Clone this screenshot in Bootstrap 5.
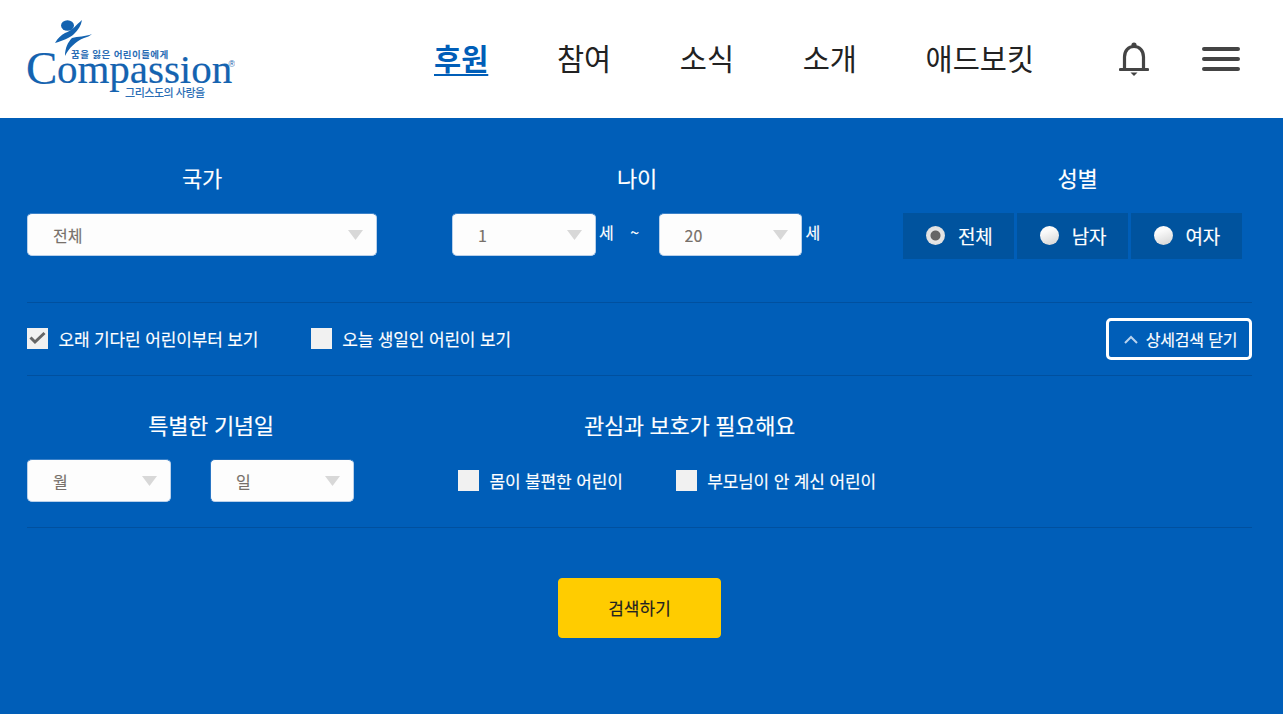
<!DOCTYPE html>
<html lang="ko">
<head>
<meta charset="UTF-8">
<title>어린이 후원</title>
<link href="https://cdn.jsdelivr.net/npm/bootstrap@5.3.0/dist/css/bootstrap.min.css" rel="stylesheet">
<style>
body { font-family: "Noto Sans CJK KR", "Noto Sans", sans-serif; background: #005eb8; letter-spacing: -0.2px; overflow: hidden; }
.top-bar { height: 118px; background: #fff; padding: 0 43px 0 27px; }
.brand-logo { display: block; width: 208px; height: 80px; margin-top: -1px; }
.main-menu { gap: 68.6px; margin-left: 199px; margin-top: -4px; }
.main-menu a { font-size: 29.5px; color: #222; text-decoration: none; padding: 0; letter-spacing: 0; line-height: 40px; }
.main-menu a.active { color: #005eb8; font-weight: 700; text-decoration: underline; text-underline-offset: 4px; }
.top-icons { margin-left: auto; gap: 53px; }
.burger { width: 38px; display: flex; flex-direction: column; gap: 6.5px; }
.burger span { display: block; height: 3.5px; background: #444; border-radius: 2px; }
.search-area { padding: 0 31px 0 27px; color: #fff; -webkit-text-stroke: 0.15px currentColor; }
.group-title { font-size: 22px; line-height: 32px; font-weight: 400; text-align: center; margin: 0 0 20px; color: #fff; letter-spacing: -0.3px; }
.first-row { padding-top: 43px; height: 185px; border-bottom: 1px solid #00509f; }
.col-country { width: 350px; margin-right: 75px; }
.col-age { width: 370px; margin-right: 81px; }
.col-gender { width: 349px; }
.pick { height: 43px; flex: none; border: 1px solid #b9d0ea; border-top-color: #3c82c9; border-radius: 5px; background-color: #fdfdfd; color: #77706a; font-size: 16px; padding: 0 24px 0 25px; background-image: url("data:image/svg+xml,%3Csvg xmlns='http://www.w3.org/2000/svg' width='15' height='10'%3E%3Cpath d='M0 0h15L7.5 10z' fill='%23d8d8d8'/%3E%3C/svg%3E"); background-position: right 13px center; background-size: 15px 10px; font-family: inherit; }
.pick-age { width: 144px; }
.tilde + .pick-age { width: 143px; }
.age-row span { font-size: 16px; line-height: 24px; margin-top: 7px; }
.age-unit { margin-left: 3px; }
.tilde + .pick-age + .age-unit { margin-left: 4px; }
.tilde { width: 45px; text-align: center; padding-right: 3px; }
.gender-box { gap: 2.5px; }
.gender-item { width: 111.3px; height: 46px; background: #00539e; margin: 0; padding: 0 0 0 23px; gap: 13px; font-size: 19px; color: #fff; }
.gender-item .form-check-input { width: 19px; height: 19px; margin: 0 0 1px; border: 0; float: none; background: linear-gradient(160deg, #fafafa 30%, #d2d2d2); }
.gender-item .form-check-input:checked { background: radial-gradient(circle, #666 0 4.5px, #e6e6e6 5.5px, #d8d8d8); }
.options-row { height: 73px; gap: 52.5px; border-bottom: 1px solid #00509f; }
.tick-item { margin: 0; padding: 0; gap: 10.5px; font-size: 17px; color: #fff; letter-spacing: -0.15px; white-space: nowrap; }
.tick-item .form-check-input { width: 21px; height: 21px; margin: 0 0 2px; float: none; border: 0; border-radius: 0; background-color: #f1f1f1; }
.tick-item .form-check-input:checked { background-color: #f1f1f1; background-image: url("data:image/svg+xml,%3Csvg xmlns='http://www.w3.org/2000/svg' viewBox='0 0 21 21'%3E%3Cpath d='M3.500 9.500l4.500 4.500 9.500-9' fill='none' stroke='%23666' stroke-width='3'/%3E%3C/svg%3E"); background-size: 21px; }
.detail-btn { width: 146px; height: 42px; border: 3px solid #fff; border-radius: 5px; color: #fff; font-size: 16px; gap: 8px; padding: 0 0 0 3px; background: transparent; letter-spacing: -0.2px; }
.detail-btn:hover { color: #fff; }
.second-row { padding-top: 32px; height: 152px; border-bottom: 1px solid #00509f; }
.col-date { width: 327px; margin-right: 104px; }
.col-date .group-title { padding-left: 41px; margin-bottom: 19px; }
.pick-date { width: 144px; }
.pick-date:last-child { border-left-color: #2a76c4; border-top-color: #1f6cba; }
.col-care { width: 417px; }
.col-care .group-title { padding-left: 46px; margin-bottom: 19px; }
.care-ticks { gap: 53px; padding-top: 1px; height: 43px; }
.find-btn { width: 163px; height: 60px; background: #ffcc00; border-color: #ffcc00; color: #222; font-size: 17px; border-radius: 4px; margin: 50px auto 0; display: block; }
</style>
</head>
<body>
<nav class="navbar top-bar flex-nowrap justify-content-start">
  <a href="#" class="d-block">
    <svg class="brand-logo" viewBox="27 18 208 80">
      <ellipse cx="67.500" cy="24.500" rx="6.500" ry="5.200" fill="#1463b0"/>
      <path d="M82 19C76 24 72 30 65 32C61 34 58 37 55 42C62 40 70 37 74 33C78 29 81 25 82 19Z" fill="#1463b0"/>
      <path d="M92 33C85 36 78 35 72 37C68 41 65 47 65 55C69 47 76 40 84 37C87 36 90 35 92 33Z" fill="#1463b0"/>
      <text x="71" y="56.500" font-size="9.500" font-weight="700" fill="#2a6db5" textLength="97" font-family="Noto Sans CJK KR">꿈을 잃은 어린이들에게</text>
      <text x="26" y="83" font-size="47" fill="#1463b0" stroke="#1463b0" stroke-width="0.2" font-family="Liberation Serif">C</text>
      <text x="57" y="82" font-size="41" fill="#1463b0" stroke="#1463b0" stroke-width="0.2" font-family="Liberation Serif" textLength="175">ompassion</text>
      <text x="228.500" y="66" font-size="9" fill="#1463b0" font-family="Liberation Sans">®</text>
      <text x="125" y="95.500" font-size="11" font-weight="500" fill="#2a6db5" textLength="80" font-family="Noto Sans CJK KR">그리스도의 사랑을</text>
    </svg>
  </a>
  <div class="nav main-menu flex-nowrap">
    <a class="nav-link active" href="#">후원</a>
    <a class="nav-link" href="#">참여</a>
    <a class="nav-link" href="#">소식</a>
    <a class="nav-link" href="#">소개</a>
    <a class="nav-link" href="#">애드보킷</a>
  </div>
  <div class="d-flex align-items-center top-icons">
    <svg width="30" height="36" viewBox="0 0 30 36">
      <circle cx="15" cy="4" r="2.600" fill="#444"/>
      <path d="M5.500 28V16C5.500 9.500 9.500 5.500 15 5.500S24.500 9.500 24.500 16V28" fill="none" stroke="#444" stroke-width="3.200"/>
      <path d="M1.500 28.500H28.500" stroke="#444" stroke-width="3.200" stroke-linecap="round"/>
      <path d="M11.500 31.500H18.500L15 35Z" fill="#444"/>
    </svg>
    <div class="burger"><span></span><span></span><span></span></div>
  </div>
</nav>

<form class="search-area">
  <div class="d-flex first-row">
    <div class="col-country">
      <h5 class="group-title">국가</h5>
      <select class="form-select pick"><option>전체</option></select>
    </div>
    <div class="col-age">
      <h5 class="group-title">나이</h5>
      <div class="d-flex age-row">
        <select class="form-select pick pick-age"><option>1</option></select>
        <span class="age-unit">세</span>
        <span class="tilde">~</span>
        <select class="form-select pick pick-age"><option>20</option></select>
        <span class="age-unit">세</span>
      </div>
    </div>
    <div class="col-gender">
      <h5 class="group-title">성별</h5>
      <div class="d-flex gender-box">
        <label class="form-check d-flex align-items-center gender-item"><input class="form-check-input" type="radio" name="gender" checked>전체</label>
        <label class="form-check d-flex align-items-center gender-item"><input class="form-check-input" type="radio" name="gender">남자</label>
        <label class="form-check d-flex align-items-center gender-item"><input class="form-check-input" type="radio" name="gender">여자</label>
      </div>
    </div>
  </div>

  <div class="d-flex align-items-center options-row">
    <label class="form-check d-flex align-items-center tick-item"><input class="form-check-input" type="checkbox" checked>오래 기다린 어린이부터 보기</label>
    <label class="form-check d-flex align-items-center tick-item"><input class="form-check-input" type="checkbox">오늘 생일인 어린이 보기</label>
    <button type="button" class="btn d-flex align-items-center justify-content-center detail-btn ms-auto">
      <svg width="14" height="9" viewBox="0 0 14 9"><path d="M1 8L7 2L13 8" fill="none" stroke="#b9d3ee" stroke-width="2"/></svg>
      상세검색 닫기
    </button>
  </div>

  <div class="d-flex second-row">
    <div class="col-date">
      <h5 class="group-title">특별한 기념일</h5>
      <div class="d-flex justify-content-between">
        <select class="form-select pick pick-date"><option>월</option></select>
        <select class="form-select pick pick-date"><option>일</option></select>
      </div>
    </div>
    <div class="col-care">
      <h5 class="group-title">관심과 보호가 필요해요</h5>
      <div class="d-flex align-items-center care-ticks">
        <label class="form-check d-flex align-items-center tick-item"><input class="form-check-input" type="checkbox">몸이 불편한 어린이</label>
        <label class="form-check d-flex align-items-center tick-item"><input class="form-check-input" type="checkbox">부모님이 안 계신 어린이</label>
      </div>
    </div>
  </div>

  <button type="button" class="btn find-btn">검색하기</button>
</form>
</body>
</html>
